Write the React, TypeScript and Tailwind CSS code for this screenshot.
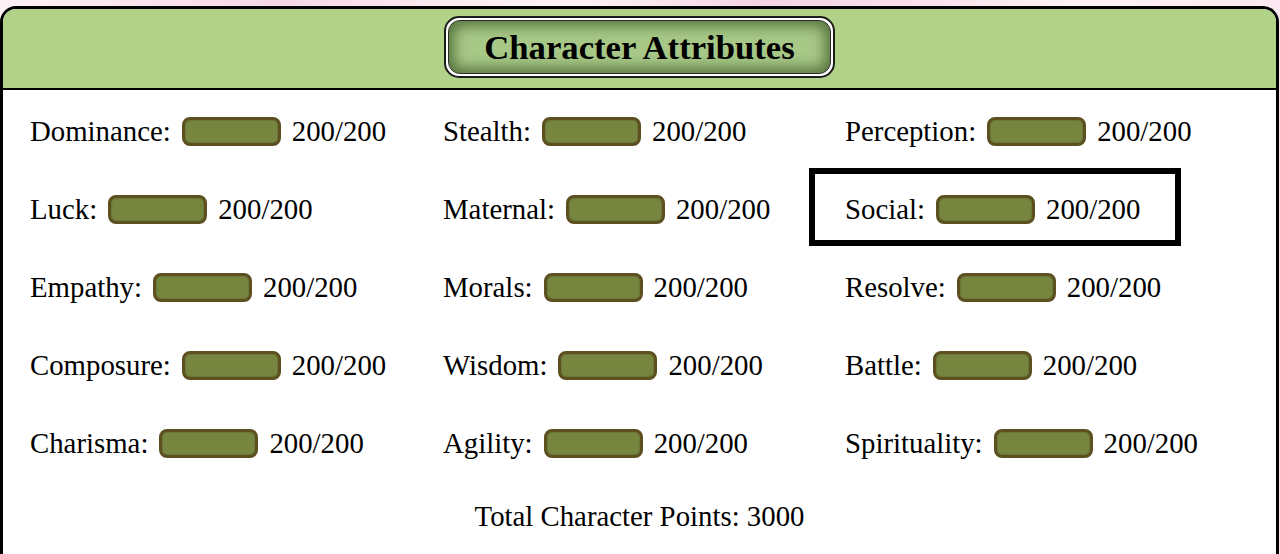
import React from "react";

const serif = { fontFamily: '"Liberation Serif", "Times New Roman", serif' };

const cols: string[][] = [
  ["Dominance", "Luck", "Empathy", "Composure", "Charisma"],
  ["Stealth", "Maternal", "Morals", "Wisdom", "Agility"],
  ["Perception", "Social", "Resolve", "Battle", "Spirituality"],
];

function Bar() {
  return (
    <div className="w-[99px] h-[29px] rounded-[8px] border-[3px] border-[#5c4f20] bg-[#77863f] shadow-[inset_0_0_2px_rgba(0,0,0,0.35)]" />
  );
}

function Cell({ name, col, highlight }: { name: string; col: number; highlight?: boolean }) {
  return (
    <div
      className={
        "h-[78px] flex items-center gap-[11px] border-[6px] w-fit pt-[4px] " +
        (highlight ? "border-black pr-[35px] " : "border-transparent pr-[30px] ") +
        (col === 0 ? "pl-[21px]" : "pl-[30px]")
      }
    >
      <span>{name}:</span>
      <Bar />
      <span>200/200</span>
    </div>
  );
}

export default function App() {
  const rows = [0, 1, 2, 3, 4];
  return (
    <div
      className="w-[1280px] h-[554px] overflow-hidden pt-[6px] bg-[linear-gradient(90deg,#fdf1f6_0%,#f7d6e6_22%,#fbeaf2_35%,#fdf3f7_45%,#f6d2e3_60%,#f9e0ec_72%,#fdf2f7_85%,#fbe7f0_100%)]"
      style={serif}
    >
      <div className="w-[1279px] h-[600px] bg-white border-[3px] border-black rounded-t-[16px] overflow-hidden text-black">
        <div className="h-[81px] bg-[#b2d28a] border-b-[2px] border-black flex justify-center pt-[7px]">
          <div className="w-[391px] h-[62px] rounded-[15px] border-[2px] border-[#1c1c1c] bg-white p-[2px]">
            <div className="w-full h-full rounded-[12px] border-[1px] border-[#2a2a2a] bg-[#a8c888] shadow-[inset_0_0_14px_5px_#55733c] flex items-center justify-center">
              <span className="text-[34.7px] font-bold leading-none mt-[3px]">Character Attributes</span>
            </div>
          </div>
        </div>
        <div className="grid grid-cols-[404px_402px_1fr] text-[28.8px] leading-none">
          {rows.map((r) =>
            [0, 1, 2].map((c) => (
              <Cell key={`${r}-${c}`} name={cols[c][r]} col={c} highlight={c === 2 && r === 1} />
            ))
          )}
        </div>
        <div className="text-center text-[28.8px] leading-[33px] mt-[20px]">Total Character Points: 3000</div>
      </div>
    </div>
  );
}
